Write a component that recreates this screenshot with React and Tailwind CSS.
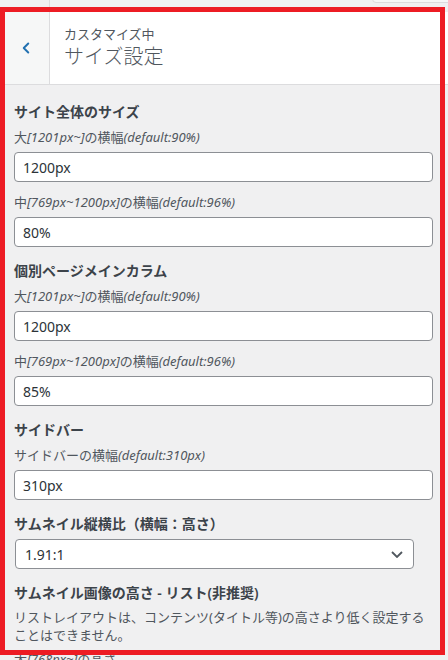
import { ChevronLeft } from "lucide-react";

const font = { fontFamily: '"Noto Sans", "Noto Sans CJK JP", sans-serif' };

function Label({ jp1, en1, jp2, en2 }) {
  return (
    <div className="h-5 leading-5 text-[13px] text-[#50575e] whitespace-nowrap">
      {jp1}
      {en1 && <span className="italic">{en1}</span>}
      {jp2}
      {en2 && <span className="italic">{en2}</span>}
    </div>
  );
}

function TextField({ label, value, last }) {
  return (
    <div className={last ? "" : "mb-[10px]"}>
      <Label {...label} />
      <div className="mt-[5px] h-[30px] rounded-[4px] border border-[#8c8f94] bg-white px-2 flex items-center text-[14px] text-[#2c3338]">
        {value}
      </div>
    </div>
  );
}

function SectionTitle({ children }) {
  return (
    <div className="h-6 leading-6 mb-[3px] text-[14px] font-semibold text-[#3c434a] whitespace-nowrap">
      {children}
    </div>
  );
}

const large = { jp1: "大", en1: "[1201px~]", jp2: "の横幅", en2: "(default:90%)" };
const middle = { jp1: "中", en1: "[769px~1200px]", jp2: "の横幅", en2: "(default:96%)" };

export default function App() {
  return (
    <div className="relative w-[448px] h-[660px] overflow-hidden bg-[#f0f0f1]" style={font}>
      {/* strip of the panel above */}
      <div className="relative h-3">
        <div className="absolute left-[49px] top-0 h-[7px] w-px bg-[#dcdcde]" />
        <div className="absolute left-[372px] -top-2 w-[90px] h-[11px] rounded-[4px] border border-[#dcdcde] bg-[#f6f7f7]" />
      </div>

      {/* section header */}
      <div className="flex h-[73px] bg-white border-b border-[#dcdcde]">
        <div className="w-[50px] shrink-0 bg-[#f6f7f7] border-r border-[#dcdcde] flex items-center justify-center pl-[3px]">
          <ChevronLeft size={18} strokeWidth={2.6} className="text-[#2271b1]" />
        </div>
        <div className="flex flex-col justify-center pl-[14px] pb-[2px]">
          <div className="leading-5 text-[13px] text-[#50575e]">カスタマイズ中</div>
          <div className="leading-[26px] text-[20px] font-light text-[#50575e]">サイズ設定</div>
        </div>
      </div>

      {/* controls */}
      <div className="pt-[15px] pl-[14px] pr-[15px]">
        <SectionTitle>サイト全体のサイズ</SectionTitle>
        <TextField label={large} value="1200px" />
        <TextField label={middle} value="80%" last />

        <div className="mt-3">
          <SectionTitle>個別ページメインカラム</SectionTitle>
          <TextField label={large} value="1200px" />
          <TextField label={middle} value="85%" last />
        </div>

        <div className="mt-3">
          <SectionTitle>サイドバー</SectionTitle>
          <TextField label={{ jp1: "サイドバーの横幅", en1: "(default:310px)" }} value="310px" last />
        </div>

        <div className="mt-3">
          <SectionTitle>サムネイル縦横比（横幅：高さ）</SectionTitle>
          <div className="mt-[2px] ml-px w-[399px] h-[30px] rounded-[4px] border border-[#8c8f94] bg-white pl-[9px] pr-[10px] flex items-center justify-between text-[14px] text-[#2c3338]">
            <span>1.91:1</span>
            <svg width="12" height="7" viewBox="0 0 12 7" fill="none">
              <path d="M1 1l5 5 5-5" stroke="#50575e" strokeWidth="1.8" />
            </svg>
          </div>
        </div>

        <div className="mt-3">
          <SectionTitle>サムネイル画像の高さ - リスト(非推奨)</SectionTitle>
          <p className="leading-[18px] text-[13px] text-[#50575e]">
            リストレイアウトは、コンテンツ(タイトル等)の高さより低く設定することはできません。
          </p>
          <div className="mt-[5px]">
            <Label jp1="大" en1="[768px~]" jp2="の高さ" />
          </div>
        </div>
      </div>

      {/* highlight frame over the panel */}
      <div className="absolute left-0 top-[7px] w-[445px] h-[648px] border-[5px] border-[#ed1c24] pointer-events-none" />
    </div>
  );
}
